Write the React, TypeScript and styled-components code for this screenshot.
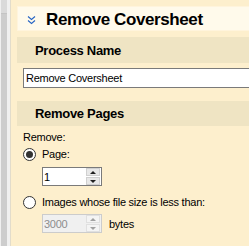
import React from "react";
import styled, { createGlobalStyle } from "styled-components";

const Global = createGlobalStyle`
  html, body { margin: 0; padding: 0; background: #f0f0f0; }
  * { box-sizing: border-box; }
`;

const Root = styled.div`
  display: flex;
  width: 249px;
  height: 246px;
  overflow: hidden;
  font-family: "Liberation Sans", Arial, sans-serif;
  font-size: 11px;
  letter-spacing: -0.25px;
  color: #000;
`;

const ScrollStrip = styled.div`
  width: 11px;
  flex: none;
  display: flex;
  background: #f0f0f0;
  border-right: 1px solid #e2dccb;
`;

const ScrollTrack = styled.div`
  margin-left: 1px;
  width: 6px;
  display: flex;
  flex-direction: column;
  background: #cdcdcd;
`;

const ScrollArrow = styled.div`
  height: 14px;
  background: #dadada;
  border-bottom: 1px solid #c4c4c4;
`;

const Panel = styled.div`
  flex: 1;
  min-width: 0;
  background: #fdefcd;
  padding: 6px 0 0 6px;
  display: flex;
  flex-direction: column;
  overflow: hidden;
`;

const HeaderBox = styled.div`
  height: 25px;
  width: 240px;
  flex: none;
  display: flex;
  align-items: center;
  background: #fffaeb;
  border: 1px solid #fff4dc;
  padding: 2px 0 0 9px;
  gap: 10px;
`;

const Title = styled.div`
  font-size: 17px;
  font-weight: bold;
  letter-spacing: -0.4px;
  white-space: nowrap;
`;

const SectionHeader = styled.div<{ $h: number; $mt: number }>`
  height: ${(p) => p.$h}px;
  margin-top: ${(p) => p.$mt}px;
  width: 240px;
  flex: none;
  display: flex;
  align-items: center;
  background: #efe4c3;
  padding-left: 18px;
  font-size: 13px;
  font-weight: bold;
  letter-spacing: -0.3px;
  white-space: nowrap;
`;

const Body = styled.div`
  display: flex;
  flex-direction: column;
  align-items: flex-start;
  padding-left: 6px;
`;

const TextBox = styled.div`
  margin-top: 5px;
  width: 240px;
  height: 20px;
  background: #fff;
  border: 1px solid #7a7a7a;
  display: flex;
  align-items: center;
  padding-left: 2px;
  white-space: nowrap;
`;

const Label = styled.div`
  margin-top: 5px;
  height: 13px;
  line-height: 13px;
`;

const RadioRow = styled.div<{ $mt: number }>`
  margin-top: ${(p) => p.$mt}px;
  height: 14px;
  display: flex;
  align-items: center;
  gap: 6px;
  white-space: nowrap;
`;

const RadioCircle = styled.div<{ $checked?: boolean }>`
  width: 13px;
  height: 13px;
  border-radius: 50%;
  border: 1px solid #333;
  background: #fff;
  display: flex;
  align-items: center;
  justify-content: center;
  &::after {
    content: "";
    width: 7px;
    height: 7px;
    border-radius: 50%;
    background: ${(p) => (p.$checked ? "#333" : "transparent")};
  }
`;

const SpinRow = styled.div<{ $mt: number }>`
  margin-top: ${(p) => p.$mt}px;
  margin-left: 19px;
  display: flex;
  align-items: center;
  gap: 7px;
`;

const Spin = styled.div<{ $disabled?: boolean }>`
  width: 60px;
  height: 19px;
  display: flex;
  border: 1px solid ${(p) => (p.$disabled ? "#cccccc" : "#7a7a7a")};
  background: ${(p) => (p.$disabled ? "#f0f0f0" : "#fff")};
  color: ${(p) => (p.$disabled ? "#8d8d8d" : "#000")};
`;

const SpinValue = styled.div`
  flex: 1;
  display: flex;
  align-items: center;
  padding-left: 1px;
`;

const SpinButtons = styled.div`
  width: 14px;
  margin: 0 1px 0 0;
  display: flex;
  flex-direction: column;
  gap: 1px;
  padding: 0;
`;

const SpinBtn = styled.div<{ $disabled?: boolean }>`
  flex: 1;
  display: flex;
  align-items: center;
  justify-content: center;
  background: ${(p) => (p.$disabled ? "#f4f4f4" : "#e8e8e8")};
  border: 1px solid ${(p) => (p.$disabled ? "#e0e0e0" : "#d0d0d0")};
`;

const Arrow = styled.div<{ $up?: boolean; $disabled?: boolean }>`
  width: 0;
  height: 0;
  border-left: 3px solid transparent;
  border-right: 3px solid transparent;
  ${(p) =>
    p.$up
      ? `border-bottom: 3px solid ${p.$disabled ? "#a0a0a0" : "#202020"};`
      : `border-top: 3px solid ${p.$disabled ? "#a0a0a0" : "#202020"};`}
`;

const Chevron = () => (
  <svg width="9" height="10" viewBox="0 0 9 10" fill="none">
    <path d="M1 1.5 L4.5 4.5 L8 1.5" stroke="#2563c4" strokeWidth="1.1" />
    <path d="M1 5.5 L4.5 8.5 L8 5.5" stroke="#2563c4" strokeWidth="1.1" />
  </svg>
);

const NumericUpDown = ({ value, disabled }: { value: string; disabled?: boolean }) => (
  <Spin $disabled={disabled}>
    <SpinValue>{value}</SpinValue>
    <SpinButtons>
      <SpinBtn $disabled={disabled}>
        <Arrow $up $disabled={disabled} />
      </SpinBtn>
      <SpinBtn $disabled={disabled}>
        <Arrow $disabled={disabled} />
      </SpinBtn>
    </SpinButtons>
  </Spin>
);

export default function App() {
  return (
    <Root>
      <Global />
      <ScrollStrip>
        <ScrollTrack>
          <ScrollArrow />
        </ScrollTrack>
      </ScrollStrip>
      <Panel>
        <HeaderBox>
          <Chevron />
          <Title>Remove Coversheet</Title>
        </HeaderBox>
        <SectionHeader $h={26} $mt={6}>Process Name</SectionHeader>
        <Body>
          <TextBox>Remove Coversheet</TextBox>
        </Body>
        <SectionHeader $h={25} $mt={13}>Remove Pages</SectionHeader>
        <Body>
          <Label>Remove:</Label>
          <RadioRow $mt={3}>
            <RadioCircle $checked />
            <span>Page:</span>
          </RadioRow>
          <SpinRow $mt={6}>
            <NumericUpDown value="1" />
          </SpinRow>
          <RadioRow $mt={9}>
            <RadioCircle />
            <span>Images whose file size is less than:</span>
          </RadioRow>
          <SpinRow $mt={5}>
            <NumericUpDown value="3000" disabled />
            <span>bytes</span>
          </SpinRow>
        </Body>
      </Panel>
    </Root>
  );
}
